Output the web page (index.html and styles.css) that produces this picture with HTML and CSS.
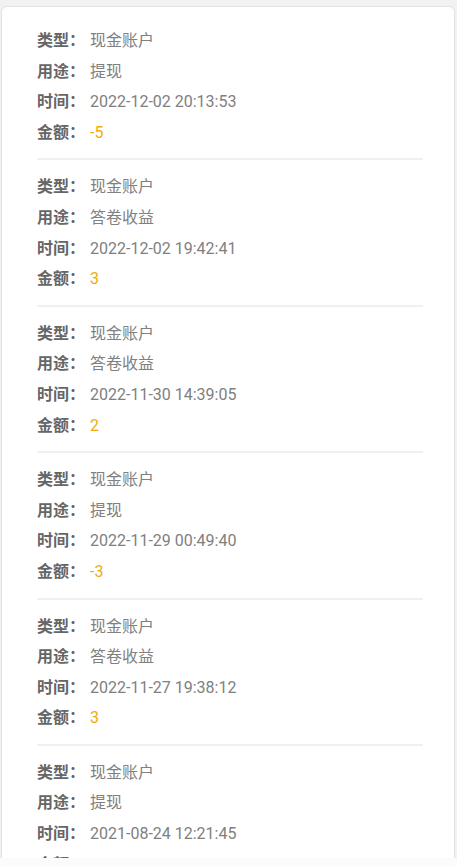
FILE: index.html
```html
<!DOCTYPE html>
<html lang="zh-CN">

<head>
	<meta charset="UTF-8">
	<title>账户明细</title>
	<link rel="stylesheet" href="styles.css">
</head>

<body>
	<div class="card">
		<div class="record">
			<div class="row"><span class="label">类型：</span><span class="value">现金账户</span></div>
			<div class="row"><span class="label">用途：</span><span class="value">提现</span></div>
			<div class="row"><span class="label">时间：</span><span class="value">2022-12-02 20:13:53</span></div>
			<div class="row"><span class="label">金额：</span><span class="value amount">-5</span></div>
		</div>
		<div class="record">
			<div class="row"><span class="label">类型：</span><span class="value">现金账户</span></div>
			<div class="row"><span class="label">用途：</span><span class="value">答卷收益</span></div>
			<div class="row"><span class="label">时间：</span><span class="value">2022-12-02 19:42:41</span></div>
			<div class="row"><span class="label">金额：</span><span class="value amount">3</span></div>
		</div>
		<div class="record">
			<div class="row"><span class="label">类型：</span><span class="value">现金账户</span></div>
			<div class="row"><span class="label">用途：</span><span class="value">答卷收益</span></div>
			<div class="row"><span class="label">时间：</span><span class="value">2022-11-30 14:39:05</span></div>
			<div class="row"><span class="label">金额：</span><span class="value amount">2</span></div>
		</div>
		<div class="record">
			<div class="row"><span class="label">类型：</span><span class="value">现金账户</span></div>
			<div class="row"><span class="label">用途：</span><span class="value">提现</span></div>
			<div class="row"><span class="label">时间：</span><span class="value">2022-11-29 00:49:40</span></div>
			<div class="row"><span class="label">金额：</span><span class="value amount">-3</span></div>
		</div>
		<div class="record">
			<div class="row"><span class="label">类型：</span><span class="value">现金账户</span></div>
			<div class="row"><span class="label">用途：</span><span class="value">答卷收益</span></div>
			<div class="row"><span class="label">时间：</span><span class="value">2022-11-27 19:38:12</span></div>
			<div class="row"><span class="label">金额：</span><span class="value amount">3</span></div>
		</div>
		<div class="record">
			<div class="row"><span class="label">类型：</span><span class="value">现金账户</span></div>
			<div class="row"><span class="label">用途：</span><span class="value">提现</span></div>
			<div class="row"><span class="label">时间：</span><span class="value">2021-08-24 12:21:45</span></div>
			<div class="row"><span class="label">金额：</span><span class="value amount">-2.5</span></div>
		</div>
	</div>
	<div class="bottom-bar"></div>
</body>

</html>
```

FILE: styles.css
```css
html {
	height: 100%;
}

body {
	margin: 0;
	padding: 6px 2px 0 1px;
	background: #f2f2f2;
	font-family: Roboto, "Noto Sans CJK SC", sans-serif;
	font-size: 16px;
	overflow: hidden;
}

.card {
	background: #fff;
	border: 1px solid #e2e2e2;
	border-radius: 6px;
	padding-top: 7px;
}

.record {
	margin: 0 31px 0 35px;
	padding: 12px 0 10px;
	border-bottom: 2px solid #f0f0f0;
}

.row {
	display: flex;
	height: 30.6px;
	line-height: 30.6px;
}

.label {
	width: 53px;
	font-weight: bold;
	color: #666;
}

.value {
	color: #808080;
}

.amount {
	color: #f0ab0c;
}

.bottom-bar {
	position: fixed;
	left: 0;
	right: 0;
	bottom: 0;
	height: 9px;
	background: #fbfbfb;
}
```
